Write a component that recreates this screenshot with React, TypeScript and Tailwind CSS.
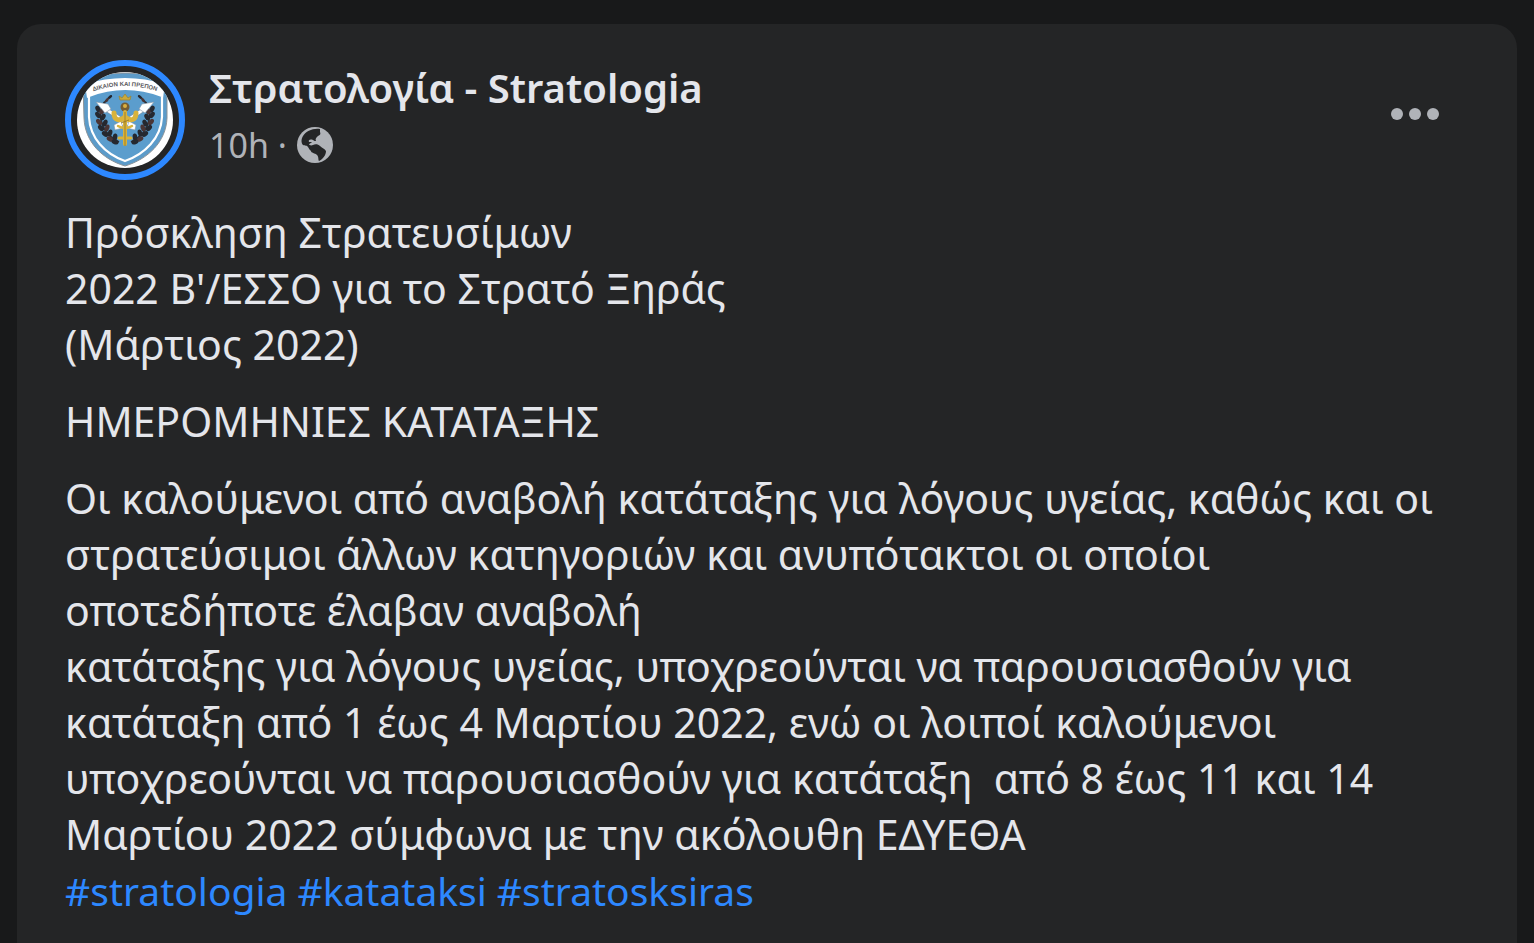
const PARAGRAPHS = [
  "Πρόσκληση Στρατευσίμων\n2022 Β'/ΕΣΣΟ για το Στρατό Ξηράς\n(Μάρτιος 2022)",
  'ΗΜΕΡΟΜΗΝΙΕΣ ΚΑΤΑΤΑΞΗΣ',
];

const DETAILS =
  'Οι καλούμενοι από αναβολή κατάταξης για λόγους υγείας, καθώς και οι στρατεύσιμοι άλλων κατηγοριών και ανυπότακτοι οι οποίοι οποτεδήποτε έλαβαν αναβολή\nκατάταξης για λόγους υγείας, υποχρεούνται να παρουσιασθούν για κατάταξη από 1 έως 4 Μαρτίου 2022, ενώ οι λοιποί καλούμενοι υποχρεούνται να παρουσιασθούν για κατάταξη \u00a0από 8 έως 11 και 14 Μαρτίου 2022 σύμφωνα με την ακόλουθη ΕΔΥΕΘΑ';

const TAGS = ['stratologia', 'katataksi', 'stratosksiras'];

// leaves of the left laurel branch: x, y, rotation
const LEAVES = [
  [45, 37, 50],
  [42, 40, 35],
  [39, 44, 10],
  [33, 49, -30],
  [37, 51, 30],
  [33, 55, -35],
  [38, 57, 30],
  [34, 62, -40],
  [40, 63, 25],
  [36, 68, -45],
  [42, 68, 20],
  [40, 74, -50],
  [45, 73, 15],
  [45, 79, -60],
  [50, 77, 10],
  [50, 82, -70],
];

const Laurel = () => (
  <g>
    <path d="M46 36C38 42 34 50 36 60C38 70 44 77 54 82" fill="none" stroke="#2b2d33" strokeWidth="1.5" />
    {LEAVES.map(([x, y, r], i) => (
      <ellipse
        key={i}
        cx={x}
        cy={y}
        rx={i < 3 ? 1.4 : 2.3}
        ry={i < 3 ? 2.6 : 3.6}
        fill={i % 3 === 1 ? '#4a3535' : '#25282f'}
        transform={`rotate(${r} ${x} ${y})`}
      />
    ))}
  </g>
);

const Arrow = () => (
  <g>
    <path d="M36 46L68 67" stroke="#8396a8" strokeWidth="4" />
    <path d="M36 46L68 67" stroke="#fff" strokeWidth="2.8" />
    <path d="M31 42L43 44L46 49L40 53Z" fill="#fff" stroke="#8396a8" strokeWidth="0.6" />
    <path d="M64 61L71 65L70 70L62 68Z" fill="#fff" stroke="#8396a8" strokeWidth="0.6" />
  </g>
);

const Emblem = () => (
  <svg viewBox="0 0 96 96" className="size-24 rounded-full bg-white" aria-hidden="true">
    <g transform="translate(-12 -12)">
      <path d="M18 24Q38 12 60 13Q84 12 102 24V58C101 82 83 99 60 106C37 99 20 82 19 58Z" fill="#5c9bc9" stroke="#8b9297" strokeWidth="1" />
      <path d="M20 24Q60 12 100 24L98 38Q60 23 22 38Z" fill="#fff" />
      <path d="M24 36Q60 22 97 36V57C96 78 80 94 60 101C40 94 25 78 24 57Z" fill="#5b9dcd" stroke="#fff" strokeWidth="2.2" />
      <path id="motto" d="M23 33Q60 19 97 33" fill="none" />
      <text className="font-['Liberation_Sans',sans-serif] text-[6px] font-bold" fill="#59595d" textAnchor="middle">
        <textPath href="#motto" startOffset="50%">ΔΙΚΑΙΟΝ ΚΑΙ ΠΡΕΠΟΝ</textPath>
      </text>
      <Laurel />
      <g transform="translate(120 0) scale(-1 1)">
        <Laurel />
      </g>
      <Arrow />
      <g transform="translate(120 0) scale(-1 1)">
        <Arrow />
      </g>
      {/* crown */}
      <path d="M54 36L55 40H65L66 36L63 38L60 34L57 38Z" fill="#c9a93b" stroke="#9c8736" strokeWidth="0.8" />
      <circle cx="60" cy="47" r="4.5" fill="#755d31" />
      <circle cx="60" cy="46" r="2" fill="#d9b040" />
      {/* eagle wings and sword */}
      <g fill="none" stroke="#d9b33b" strokeLinecap="round">
        <path d="M60 57C54 62 49 60 49 53M60 57C66 62 71 60 71 53" strokeWidth="5" />
        <path d="M53 66Q60 70 67 66" strokeWidth="2.4" />
        <path d="M60 52V84" strokeWidth="4" />
        <path d="M54 78H66" strokeWidth="3" />
      </g>
      <path d="M60 52V86M56 63L64 60" fill="none" stroke="#8f7429" strokeWidth="0.8" />
    </g>
  </svg>
);

const Globe = () => (
  <svg viewBox="0 0 36 36" className="size-9" role="img" aria-label="Public">
    <circle cx="18" cy="18" r="18" fill="#b0b3b8" />
    <path
      d="M23 2C16 1 9 4 6 9C4 12 4 16 6 18C8 19 10 18 11 20C12 22 13 23 14 24C14 26 18 26 20 28C22 30 21 33 22 34C26 32 29 28 29 24C27 21 25 21 23 19C21 17 18 17 16 18C14 19 12 18 12 17L19 14C18 12 19 11 21 9C23 8 24 7 23 5Z"
      fill="#242526"
    />
    <path d="M12 15C11 13 13 12 16 13C17 14 18 14 20 14V17C18 16 16 17 14 17C12 16 15 16 15 15Z" fill="#b0b3b8" />
  </svg>
);

export default function App() {
  return (
    <div className="flex min-h-screen flex-col bg-[#18191a] px-[17px] pt-6 font-['Noto_Sans',sans-serif]">
      <article className="grow rounded-t-3xl bg-[#242526] px-12 pt-9 text-[#e4e6eb]">
        <header className="flex items-start">
          <a href="#" className="shrink-0 rounded-full border-[6px] border-[#2d88ff] p-1.5" aria-label="Stratologia">
            <Emblem />
          </a>
          <div className="ml-6 grow">
            <h2 className="text-[40px] leading-[56px] font-semibold">
              <a href="#">Στρατολογία - Stratologia</a>
            </h2>
            <div className="flex items-center gap-2.5 text-[34px] leading-[58px] text-[#b0b3b8]">
              <span>10h ·</span>
              <Globe />
            </div>
          </div>
          <button type="button" className="mt-9 mr-[30px] flex shrink-0 gap-1.5 py-3" aria-label="More">
            <span className="size-3 rounded-full bg-[#b0b3b8]" />
            <span className="size-3 rounded-full bg-[#b0b3b8]" />
            <span className="size-3 rounded-full bg-[#b0b3b8]" />
          </button>
        </header>
        <div className="mt-6 flex flex-col gap-[21px] text-[41px] leading-[56px]">
          {PARAGRAPHS.map((text) => (
            <p key={text} className="whitespace-pre-line">{text}</p>
          ))}
          <div>
            <p className="whitespace-pre-line">{DETAILS}</p>
            <p className="flex flex-wrap gap-x-2.5 text-[39px] leading-[58px] text-[#2d88ff]">
              {TAGS.map((tag) => (
                <a key={tag} href="#">#{tag}</a>
              ))}
            </p>
          </div>
        </div>
      </article>
    </div>
  );
}
